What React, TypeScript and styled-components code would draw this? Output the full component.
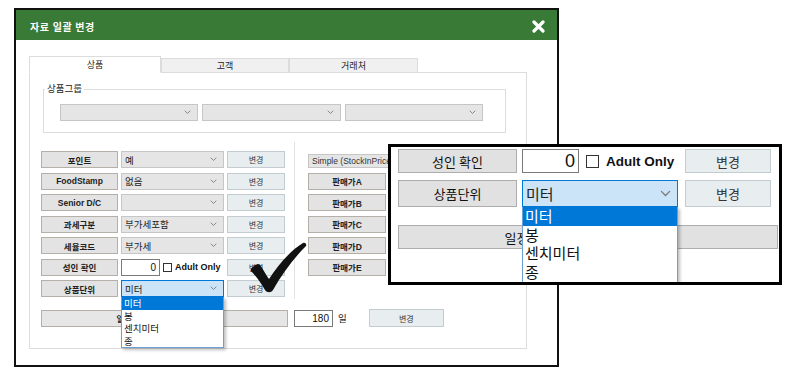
import React from 'react'
import styled, { createGlobalStyle } from 'styled-components'

const GREEN = '#3a7a37'
const SANS = '"Liberation Sans", "Noto Sans CJK KR", sans-serif'

const GlobalStyle = createGlobalStyle`
  html, body { margin: 0; padding: 0; background: #fff; }
  body { font-family: ${SANS}; color: #111; }
  * { box-sizing: border-box; }
`

const Stage_ = styled.div({
  position: 'relative',
  width: '800px',
  height: '384px',
  overflow: 'hidden',
  padding: '8px 0 0 14px',
})

const Dialog_ = styled.div({
  width: '545px',
  height: '359px',
  border: '2px solid #111',
  background: '#fff',
  display: 'flex',
  flexDirection: 'column',
})

const TitleBar_ = styled.div({
  height: '30px',
  flexShrink: 0,
  background: GREEN,
  display: 'flex',
  alignItems: 'center',
  justifyContent: 'space-between',
  padding: '2px 12px 0 14px',
})

const Title_ = styled.span({
  color: '#fff',
  fontSize: '10px',
  fontWeight: 700,
  letterSpacing: '0.5px',
})

const Body_ = styled.div({
  padding: '15px 0 0 13px',
})

const TabRow_ = styled.div({
  display: 'flex',
  alignItems: 'flex-end',
  height: '17px',
})

const Tab_ = styled.div<{ $active?: boolean; $w: number }>(({ $active, $w }) => ({
  width: `${$w}px`,
  height: $active ? '17px' : '15px',
  background: $active ? '#fff' : '#f0f0f0',
  border: '1px solid #dcdcdc',
  borderBottom: $active ? '1px solid #fff' : '1px solid #dcdcdc',
  marginBottom: '-1px',
  position: 'relative',
  zIndex: $active ? 1 : 0,
  display: 'flex',
  alignItems: 'center',
  justifyContent: 'center',
  fontSize: '9px',
  color: '#222',
}))

const TabPanel_ = styled.div({
  width: '498px',
  height: '277px',
  border: '1px solid #dcdcdc',
  padding: '10px 0 0 12px',
})

const GroupBox_ = styled.fieldset({
  margin: '0 0 0 1px',
  padding: 0,
  width: '463px',
  height: '50px',
  border: '1px solid #dcdcdc',
})

const Legend_ = styled.legend({
  marginLeft: '1px',
  padding: '0 2px',
  fontSize: '9.5px',
  lineHeight: '12px',
  color: '#222',
})

const GroupSelects_ = styled.div({
  display: 'flex',
  gap: '4px',
  margin: '9px 0 0 16px',
})

const Select_ = styled.div<{ $w?: number; $h?: number; $open?: boolean; $size?: number }>(
  ({ $w, $h = 17, $open, $size = 9.5 }) => ({
    position: 'relative',
    width: $w ? `${$w}px` : '100%',
    height: `${$h}px`,
    background: $open ? '#cce4f7' : '#e5e5e5',
    border: `1px solid ${$open ? '#0078d7' : '#c6c6c6'}`,
    display: 'flex',
    alignItems: 'center',
    justifyContent: 'space-between',
    padding: '0 6px 0 3px',
    fontSize: `${$size}px`,
    color: '#222',
  })
)

const Columns_ = styled.div({
  display: 'flex',
  marginTop: '18px',
  marginLeft: '-1px',
})

const FieldGrid_ = styled.div({
  display: 'grid',
  gridTemplateColumns: '77px 103px 58px',
  gridAutoRows: '17px',
  columnGap: '3px',
  rowGap: '4.5px',
})

const Divider_ = styled.div({
  width: '1px',
  height: '157px',
  marginTop: '-9px',
  marginLeft: '9px',
  background: '#e2e2e2',
})

const PriceGrid_ = styled.div({
  display: 'grid',
  gridTemplateColumns: '78px',
  gridAutoRows: '17px',
  rowGap: '4.5px',
  marginLeft: '13px',
})

const LabelButton_ = styled.div<{ $size?: number }>(({ $size = 8.5 }) => ({
  background: '#e3e3e3',
  border: '1px solid #b4b0a8',
  display: 'flex',
  alignItems: 'center',
  justifyContent: 'center',
  fontSize: `${$size}px`,
  fontWeight: 700,
  color: '#222',
  whiteSpace: 'nowrap',
  overflow: 'hidden',
}))

const ActionButton_ = styled.div<{ $w?: number; $size?: number }>(({ $w, $size = 8 }) => ({
  width: $w ? `${$w}px` : 'auto',
  background: '#e8edef',
  border: '1px solid #c3ccd0',
  display: 'flex',
  alignItems: 'center',
  justifyContent: 'center',
  fontSize: `${$size}px`,
  color: '#333',
}))

const SimpleBox_ = styled.div({
  alignSelf: 'end',
  height: '14px',
  width: '90px',
  background: '#e5e5e5',
  border: '1px solid #c6c6c6',
  fontSize: '8.5px',
  padding: '0 0 0 3px',
  display: 'flex',
  alignItems: 'center',
  whiteSpace: 'nowrap',
  overflow: 'hidden',
  color: '#333',
})

const AdultCell_ = styled.div<{ $gap: number }>(({ $gap }) => ({
  display: 'flex',
  alignItems: 'center',
  gap: `${$gap}px`,
  whiteSpace: 'nowrap',
}))

const NumberInput_ = styled.div<{ $w: number; $h: number; $size: number }>(({ $w, $h, $size }) => ({
  width: `${$w}px`,
  height: `${$h}px`,
  background: '#fff',
  border: '1px solid #7a7a7a',
  display: 'flex',
  alignItems: 'center',
  justifyContent: 'flex-end',
  padding: '0 3px',
  fontSize: `${$size}px`,
  color: '#111',
}))

const CheckBox_ = styled.span<{ $s: number }>(({ $s }) => ({
  width: `${$s}px`,
  height: `${$s}px`,
  border: '1px solid #333',
  background: '#fff',
  flexShrink: 0,
}))

const AdultText_ = styled.span<{ $size: number }>(({ $size }) => ({
  fontSize: `${$size}px`,
  fontWeight: 700,
  color: '#111',
}))

const DropCell_ = styled.div({
  position: 'relative',
})

const DropList_ = styled.div<{ $itemH: number; $size: number }>(({ $itemH, $size }) => ({
  position: 'absolute',
  left: 0,
  top: '100%',
  width: '100%',
  zIndex: 5,
  background: '#fff',
  borderLeft: '1px solid #6e9fd4',
  borderRight: '1px solid #6e9fd4',
  borderBottom: '1px solid #6e9fd4',
  boxShadow: '2px 2px 3px rgba(0,0,0,0.25)',
  fontSize: `${$size}px`,
  lineHeight: `${$itemH}px`,
  fontFamily: '"Noto Sans CJK KR", sans-serif',
}))

const DropItem_ = styled.div<{ $selected?: boolean }>(({ $selected }) => ({
  padding: '0 2px',
  background: $selected ? '#0078d7' : 'transparent',
  color: $selected ? '#fff' : '#111',
}))

const BottomRow_ = styled.div({
  display: 'flex',
  alignItems: 'center',
  marginTop: '10px',
  marginLeft: '-1px',
})

const WideButton_ = styled.div<{ $w: number; $h: number; $size: number }>(({ $w, $h, $size }) => ({
  width: `${$w}px`,
  height: `${$h}px`,
  flexShrink: 0,
  background: '#e6e6e6',
  border: '1px solid #b4b0a8',
  display: 'flex',
  alignItems: 'center',
  justifyContent: 'center',
  fontSize: `${$size}px`,
  fontWeight: 700,
  letterSpacing: '-0.5px',
  color: '#222',
  whiteSpace: 'nowrap',
}))

const DayUnit_ = styled.span({
  fontSize: '9.5px',
  margin: '0 22px 0 5px',
  color: '#222',
})

// 확대 설명 패널 (annotation)
const Callout_ = styled.div({
  position: 'absolute',
  left: '388px',
  top: '144px',
  width: '394px',
  height: '141px',
  border: '3px solid #000',
  background: '#fff',
  overflow: 'hidden',
  padding: '2px 0 0 7px',
  zIndex: 10,
})

const CalloutGrid_ = styled.div({
  display: 'grid',
  gridTemplateColumns: '119px 156px 88px',
  gridTemplateRows: '24px 27px',
  columnGap: '5px',
  rowGap: '7px',
})

const CalloutLabel_ = styled.div({
  background: '#e1e1e1',
  border: '1px solid #adadad',
  display: 'flex',
  alignItems: 'center',
  justifyContent: 'center',
  fontSize: '13px',
  color: '#111',
  fontFamily: '"Noto Sans CJK KR", sans-serif',
})

const CalloutWide_ = styled.div({
  marginTop: '18px',
  width: '380px',
  height: '24px',
  background: '#e1e1e1',
  border: '1px solid #adadad',
  display: 'flex',
  alignItems: 'center',
  justifyContent: 'center',
  fontSize: '13px',
  color: '#111',
  fontFamily: '"Noto Sans CJK KR", sans-serif',
  whiteSpace: 'nowrap',
})

const CheckMark_ = styled.svg({
  position: 'absolute',
  left: '248px',
  top: '241px',
  zIndex: 6,
})

const Chevron = ({ size = 7 }: { size?: number }) => (
  <svg width={size} height={size * 0.6} viewBox="0 0 10 6">
    <polyline points="1,1 5,5 9,1" fill="none" stroke="#777" strokeWidth="1.2" />
  </svg>
)

const rows = [
  { label: '포인트', value: '예' },
  { label: 'FoodStamp', value: '없음' },
  { label: 'Senior D/C', value: '' },
  { label: '과세구분', value: '부가세포함' },
  { label: '세율코드', value: '부가세' },
]

const units = ['미터', '봉', '센치미터', '종']
const wideText = '일정기간 미판매 상품 일괄 삭제'

export default function App() {
  return (
    <>
      <GlobalStyle />
      <Stage_>
        <Dialog_>
          <TitleBar_>
            <Title_>자료 일괄 변경</Title_>
            <svg width="13" height="13" viewBox="0 0 13 13">
              <path d="M2 2 L11 11 M11 2 L2 11" stroke="#fff" strokeWidth="3.2" strokeLinecap="round" />
            </svg>
          </TitleBar_>
          <Body_>
            <TabRow_>
              <Tab_ $active $w={132}>상품</Tab_>
              <Tab_ $w={128}>고객</Tab_>
              <Tab_ $w={129}>거래처</Tab_>
            </TabRow_>
            <TabPanel_>
              <GroupBox_>
                <Legend_>상품그룹</Legend_>
                <GroupSelects_>
                  <Select_ $w={138} $h={17}><span /><Chevron /></Select_>
                  <Select_ $w={139} $h={17}><span /><Chevron /></Select_>
                  <Select_ $w={138} $h={17}><span /><Chevron /></Select_>
                </GroupSelects_>
              </GroupBox_>

              <Columns_>
                <FieldGrid_>
                  {rows.map((r) => (
                    <React.Fragment key={r.label}>
                      <LabelButton_>{r.label}</LabelButton_>
                      <Select_>
                        <span>{r.value}</span>
                        <Chevron />
                      </Select_>
                      <ActionButton_>변경</ActionButton_>
                    </React.Fragment>
                  ))}
                  <LabelButton_>성인 확인</LabelButton_>
                  <AdultCell_ $gap={3}>
                    <NumberInput_ $w={39} $h={17} $size={10}>0</NumberInput_>
                    <CheckBox_ $s={9} />
                    <AdultText_ $size={9}>Adult Only</AdultText_>
                  </AdultCell_>
                  <ActionButton_>변경</ActionButton_>
                  <LabelButton_>상품단위</LabelButton_>
                  <DropCell_>
                    <Select_ $open>
                      <span>미터</span>
                      <Chevron />
                    </Select_>
                    <DropList_ $itemH={12.5} $size={9.5}>
                      {units.map((u, i) => (
                        <DropItem_ key={u} $selected={i === 0}>{u}</DropItem_>
                      ))}
                    </DropList_>
                  </DropCell_>
                  <ActionButton_>변경</ActionButton_>
                </FieldGrid_>

                <Divider_ />

                <PriceGrid_>
                  <SimpleBox_>Simple (StockInPrice ◦</SimpleBox_>
                  {['A', 'B', 'C', 'D', 'E'].map((k) => (
                    <LabelButton_ key={k}>판매가{k}</LabelButton_>
                  ))}
                </PriceGrid_>
              </Columns_>

              <BottomRow_>
                <WideButton_ $w={247} $h={17} $size={8}>{wideText}</WideButton_>
                <NumberInput_ $w={39} $h={17} $size={10} style={{ marginLeft: '6px' }}>180</NumberInput_>
                <DayUnit_>일</DayUnit_>
                <ActionButton_ $w={75} style={{ height: '18px' }}>변경</ActionButton_>
              </BottomRow_>
            </TabPanel_>
          </Body_>
        </Dialog_>

        <CheckMark_ width="62" height="56" viewBox="0 0 62 56">
          <path
            d="M3 28 C6 24 10 22 12 24 C15 28 18 34 21 38 C30 24 42 10 55 2 C57 1 59 3 58 5 C46 17 34 33 25 49 C23 52 19 52 17 49 C13 42 8 35 3 30 Z"
            fill="#111"
          />
        </CheckMark_>

        <Callout_>
          <CalloutGrid_>
            <CalloutLabel_>성인 확인</CalloutLabel_>
            <AdultCell_ $gap={7}>
              <NumberInput_ $w={57} $h={24} $size={18}>0</NumberInput_>
              <CheckBox_ $s={13} />
              <AdultText_ $size={13.5}>Adult Only</AdultText_>
            </AdultCell_>
            <ActionButton_ $size={13} style={{ marginLeft: '2px' }}>변경</ActionButton_>
            <CalloutLabel_>상품단위</CalloutLabel_>
            <DropCell_>
              <Select_ $open $h={27} $size={15}>
                <span>미터</span>
                <Chevron size={11} />
              </Select_>
              <DropList_ $itemH={18.7} $size={15}>
                {units.map((u, i) => (
                  <DropItem_ key={u} $selected={i === 0}>{u}</DropItem_>
                ))}
              </DropList_>
            </DropCell_>
            <ActionButton_ $size={13} style={{ marginLeft: '2px' }}>변경</ActionButton_>
          </CalloutGrid_>
          <CalloutWide_>{wideText}</CalloutWide_>
        </Callout_>
      </Stage_>
    </>
  )
}
